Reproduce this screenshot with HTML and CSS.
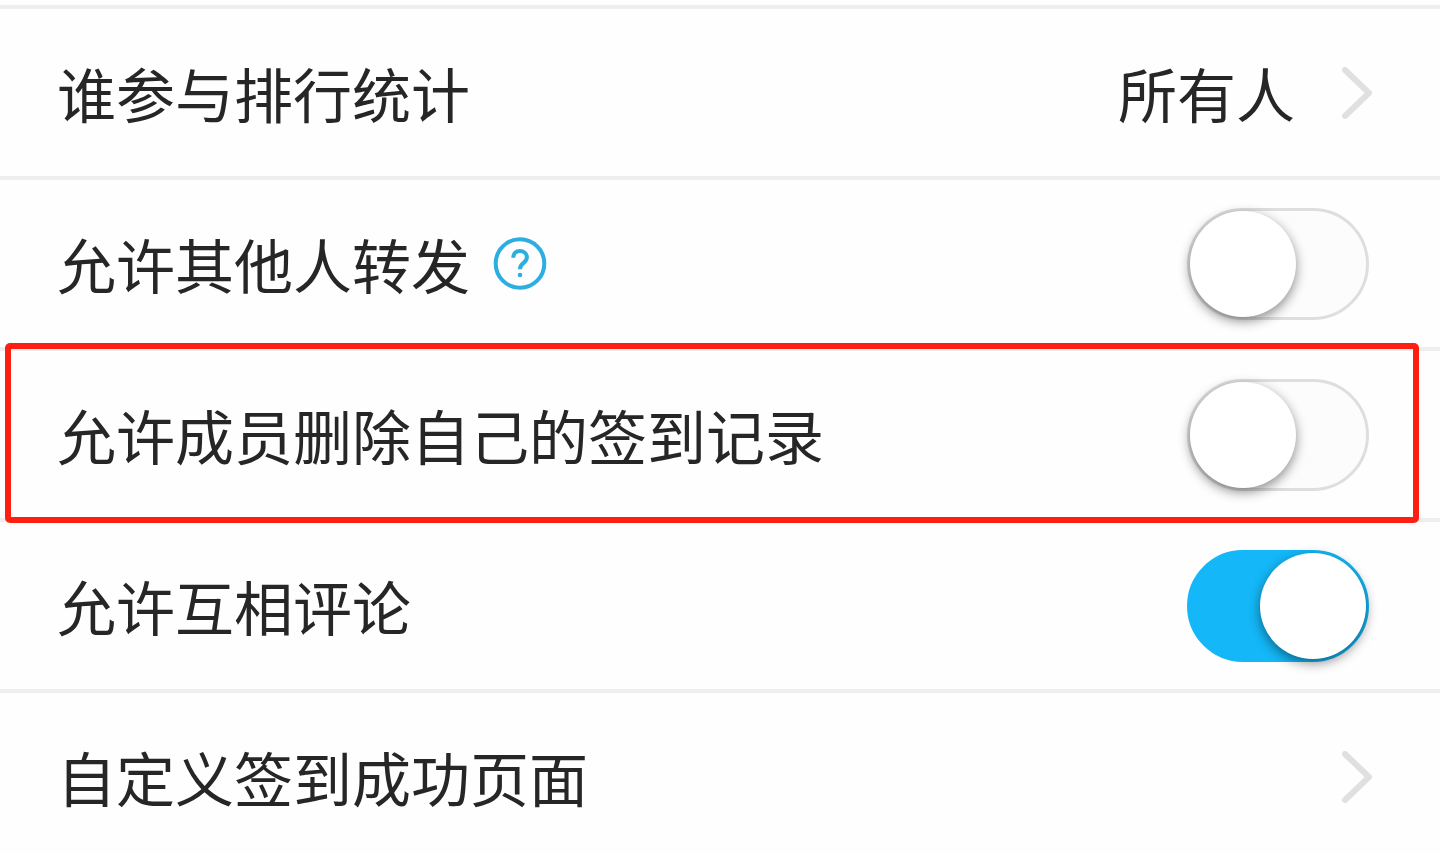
FILE: index.html
```
<!DOCTYPE html>
<html lang="zh-CN">
<head>
<meta charset="utf-8">
<meta name="viewport" content="width=device-width, initial-scale=1">
<title>签到设置</title>
<link rel="stylesheet" href="styles.css">
</head>
<body>
<main class="settings">
  <button type="button" class="row row-link">
    <span class="label">谁参与排行统计</span>
    <span class="value">所有人</span>
    <svg class="chevron" viewBox="0 0 32 52" aria-hidden="true"><path d="M4 3 L28 26 L4 49"/></svg>
  </button>
  <div class="row">
    <label class="label" for="forward">允许其他人转发</label>
    <button type="button" class="help" aria-label="帮助">
      <svg class="help-icon" viewBox="0 0 54 54" aria-hidden="true">
        <circle cx="27" cy="26.5" r="24.3"/>
        <path d="M20.3 20.8 C20.3 16.3 23 14.1 26.8 14.1 C30.9 14.1 33.9 16.7 33.9 20.3 C33.9 23 32.3 24.7 30.1 26.4 C27.8 28.1 27 29.2 27 32.2"/>
        <circle class="dot" cx="27" cy="38" r="2.3"/>
      </svg>
    </button>
    <input class="switch" type="checkbox" role="switch" id="forward">
  </div>
  <div class="row highlighted">
    <label class="label" for="delete">允许成员删除自己的签到记录</label>
    <input class="switch" type="checkbox" role="switch" id="delete">
  </div>
  <div class="row">
    <label class="label" for="comment">允许互相评论</label>
    <input class="switch" type="checkbox" role="switch" id="comment" checked>
  </div>
  <button type="button" class="row row-link">
    <span class="label">自定义签到成功页面</span>
    <svg class="chevron" viewBox="0 0 32 52" aria-hidden="true"><path d="M4 3 L28 26 L4 49"/></svg>
  </button>
</main>
</body>
</html>
```
FILE: styles.css
```
* {
  box-sizing: border-box;
}

html {
  scrollbar-width: none;
}

body {
  margin: 0;
  background: #fefefe;
  color: #262626;
  font-family: "Noto Sans CJK SC", sans-serif;
  font-size: 59px;
  line-height: 88px;
}

.settings {
  display: flex;
  flex-direction: column;
  padding-top: 5px;
}

.row {
  position: relative;
  display: flex;
  align-items: center;
  width: 100%;
  min-height: 171px;
  padding: 0 71px 0 57px;
  border: 0;
  border-top: 4px solid #eee;
  background: none;
  color: inherit;
  font: inherit;
  text-align: left;
}

.label {
  margin-right: auto;
  white-space: nowrap;
}

.value {
  margin-right: 46px;
}

.row-link {
  padding-right: 67px;
  cursor: pointer;
}

.chevron {
  flex: none;
  width: 32px;
  height: 52px;
  fill: none;
  stroke: #e0e0e0;
  stroke-width: 6;
  stroke-linecap: round;
  stroke-linejoin: round;
}

.label:has(+ .help) {
  margin-right: 23px;
}

.help {
  display: flex;
  margin-right: auto;
  padding: 0;
  border: 0;
  background: none;
  cursor: pointer;
}

.help-icon {
  width: 54px;
  height: 54px;
  fill: none;
  stroke: #2daee0;
  stroke-width: 4;
}

.help-icon .dot {
  fill: #2daee0;
  stroke: none;
}

.switch {
  appearance: none;
  display: flex;
  flex: none;
  width: 182px;
  height: 112px;
  margin: 0;
  padding: 0;
  border: 3px solid #dedede;
  border-radius: 56px;
  background: #fcfcfc;
  cursor: pointer;
}

.switch::before {
  content: "";
  width: 106px;
  height: 106px;
  border-radius: 50%;
  background: #fff;
  box-shadow: 0 4px 12px rgba(0, 0, 0, 0.45);
}

.switch:checked {
  justify-content: flex-end;
  border-color: #14b7f7;
  background: #14b7f7;
}

.highlighted {
  z-index: 1;
}

.highlighted::after {
  content: "";
  position: absolute;
  inset: -8px 21px -5px 5px;
  border: 6px solid #ff1f12;
  border-radius: 5px;
  pointer-events: none;
}
```
